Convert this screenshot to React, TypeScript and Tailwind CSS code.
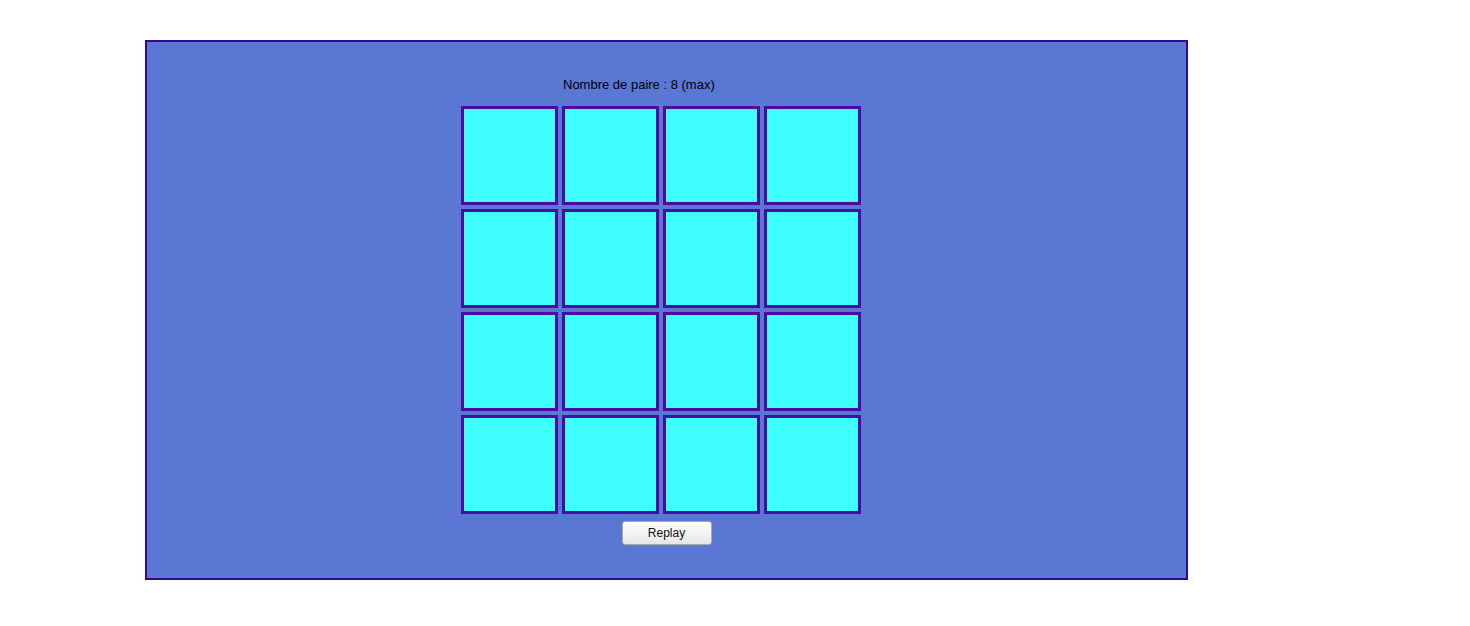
const cards = Array.from({ length: 16 }, (_, i) => i);

export default function App() {
  return (
    <div className="min-h-[626px] w-[1470px] bg-white pt-[40px] font-['Liberation_Sans',Arial,sans-serif]">
      <div className="ml-[145px] h-[540px] w-[1043px] border-2 border-[#33098f] bg-[#5a77d3]">
        <p className="ml-[416px] mt-[35px] text-[13px] leading-[15px] text-black">
          Nombre de paire : 8 (max)
        </p>
        <div className="ml-[314px] mt-[14px] grid w-[400px] grid-cols-[repeat(4,97px)] gap-x-[4px] gap-y-[4px]">
          {cards.map((c) => (
            <div
              key={c}
              className="h-[99px] w-[97px] border-[3px] border-[#4b0aa0] bg-[#3ffefe]"
            />
          ))}
        </div>
        <div className="mt-[7px] flex justify-center">
          <button className="h-[24px] w-[90px] rounded-[3px] border border-[#a9a9a9] bg-gradient-to-b from-white to-[#e6e6e6] text-[12px] text-[#111]">
            Replay
          </button>
        </div>
      </div>
    </div>
  );
}
